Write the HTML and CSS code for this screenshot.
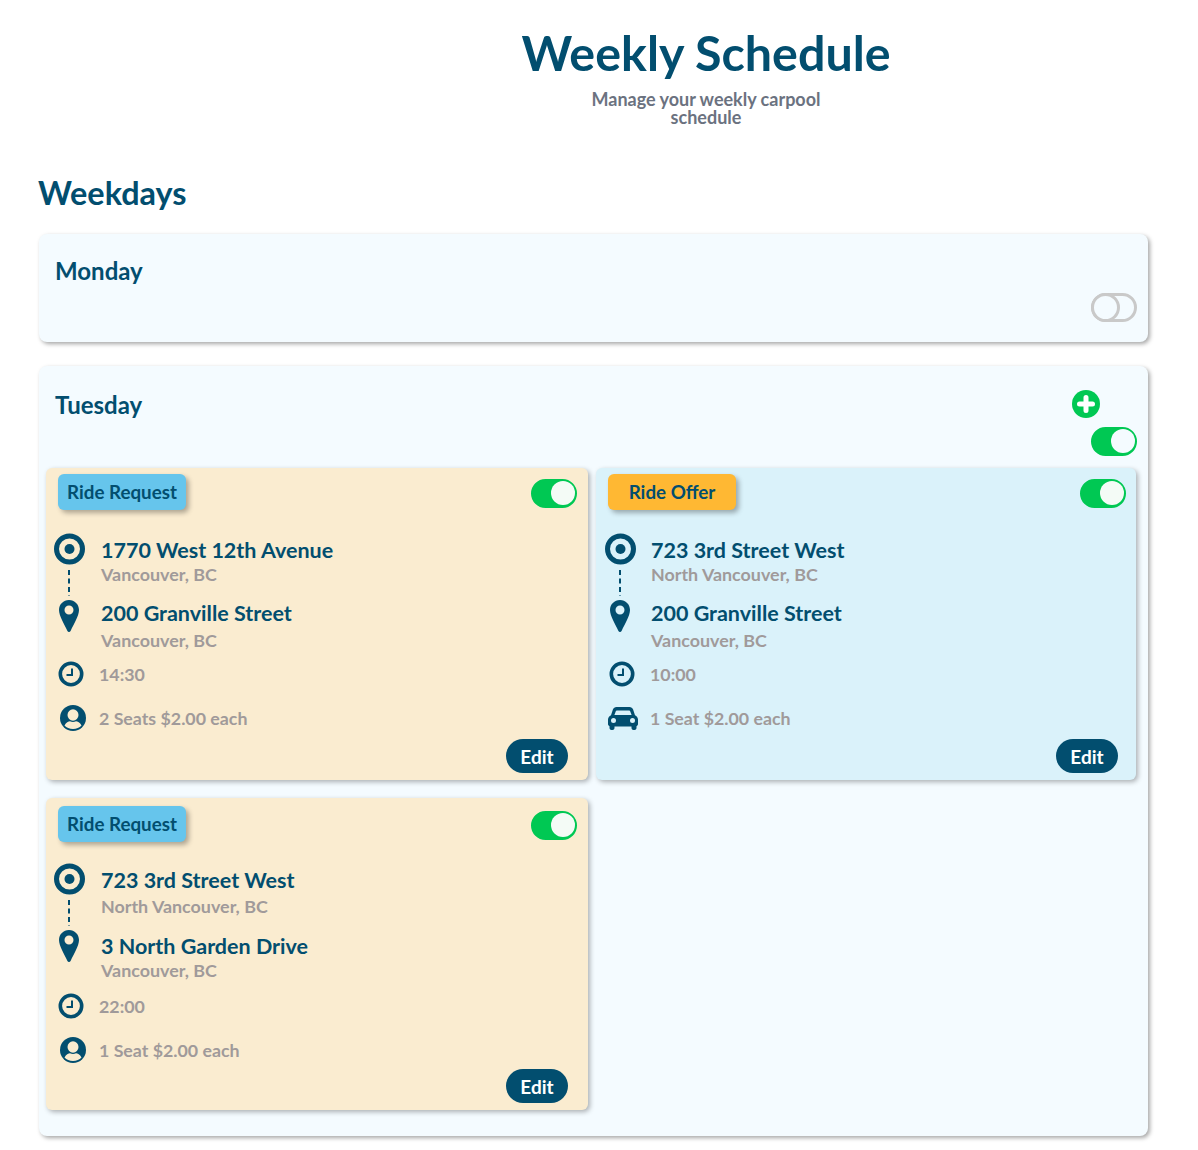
FILE: index.html
```html
<!DOCTYPE html>
<html lang="en">
<head>
<meta charset="utf-8">
<title>Weekly Schedule</title>
<link rel="stylesheet" href="styles.css">
</head>
<body>
<svg class="defs" width="0" height="0" aria-hidden="true">
  <defs>
    <symbol id="rail" viewBox="0 0 32 100">
      <circle cx="16.5" cy="16" r="13" fill="none" stroke="#024e6f" stroke-width="5"/>
      <circle cx="16.5" cy="16" r="5" fill="#024e6f"/>
      <path d="M16 37v26" stroke="#024e6f" stroke-width="2" stroke-dasharray="5 3.5" fill="none"/>
      <path fill-rule="evenodd" fill="#024e6f" d="M16 67c-5.600 0-10 4.400-10 10 0 6 5.500 14.500 8.300 20.800.7 1.600 2.700 1.600 3.400 0C20.500 91.500 26 83 26 77c0-5.600-4.400-10-10-10zm0 5.500a4.500 4.500 0 1 1 0 9 4.500 4.500 0 0 1 0-9z"/>
    </symbol>
    <symbol id="clock" viewBox="0 0 26 26">
      <circle cx="13" cy="13" r="10.700" fill="none" stroke="#024e6f" stroke-width="3.600"/>
      <path d="M14 7.500v6.500H8.500" fill="none" stroke="#024e6f" stroke-width="2"/>
    </symbol>
    <symbol id="person" viewBox="0 0 26 26">
      <circle cx="13" cy="13" r="13" fill="#024e6f"/>
      <ellipse cx="13" cy="10" rx="5.500" ry="5.800" fill="currentColor"/>
      <path d="M4.500 20.500c1.500-3 4-4.200 5.500-4.200 1.800 1 4.200 1 6 0 1.500 0 4 1.200 5.500 4.200-2 2.300-5 3.500-8.500 3.500s-6.500-1.200-8.500-3.500z" fill="currentColor"/>
    </symbol>
    <symbol id="car" viewBox="0 0 30 24">
      <path fill="#024e6f" fill-rule="evenodd" d="M8.500 1h13c1.700 0 3 1 3.600 2.600l1.900 5.600c1.700.7 3 2.300 3 4.300v4.500c0 1-.6 1.800-1.500 2.200V22c0 1.100-.9 2-2 2h-1c-1.100 0-2-.9-2-2v-1.500H6.500V22c0 1.100-.9 2-2 2h-1c-1.100 0-2-.9-2-2v-1.800C.6 19.800 0 19 0 18v-4.500c0-2 1.300-3.600 3-4.300l1.900-5.600C5.500 2 6.800 1 8.500 1zm.4 3.500c-.6 0-1 .3-1.200.9L6.400 9h17.200l-1.300-3.600c-.2-.6-.6-.9-1.200-.9H8.900zM5.500 12a2.500 2.500 0 1 0 0 5 2.500 2.500 0 0 0 0-5zm19 0a2.500 2.500 0 1 0 0 5 2.500 2.500 0 0 0 0-5z"/>
    </symbol>
  </defs>
</svg>

<header class="page-head">
  <h1 class="page-title">Weekly Schedule</h1>
  <p class="page-sub">Manage your weekly carpool schedule</p>
</header>

<main class="page">
  <h2 class="section-title">Weekdays</h2>

  <section class="day day-empty">
    <div class="day-head">
      <h3 class="day-name">Monday</h3>
      <div class="day-actions">
        <span class="toggle"></span>
      </div>
    </div>
  </section>

  <section class="day">
    <div class="day-head">
      <h3 class="day-name">Tuesday</h3>
      <div class="day-actions">
        <svg class="plus" viewBox="0 0 28 28" aria-hidden="true">
          <circle cx="14" cy="14" r="14" fill="#00c853"/>
          <path d="M14 7.500v13M7.500 14h13" stroke="#fff" stroke-width="5" stroke-linecap="round"/>
        </svg>
        <span class="toggle on"></span>
      </div>
    </div>

    <div class="rides">
      <article class="ride request">
        <div class="ride-head">
          <span class="badge">Ride Request</span>
          <span class="toggle on"></span>
        </div>
        <div class="route">
          <svg class="rail"><use href="#rail"/></svg>
          <div class="stops">
            <div class="addr">1770 West 12th Avenue</div>
            <div class="city">Vancouver, BC</div>
            <div class="addr second">200 Granville Street</div>
            <div class="city city-end">Vancouver, BC</div>
          </div>
        </div>
        <div class="meta time"><svg class="ico-clock"><use href="#clock"/></svg><span>14:30</span></div>
        <div class="meta seats"><svg class="ico-person"><use href="#person"/></svg><span>2 Seats $2.00 each</span></div>
        <div class="ride-foot"><button class="edit">Edit</button></div>
      </article>

      <article class="ride offer">
        <div class="ride-head">
          <span class="badge">Ride Offer</span>
          <span class="toggle on"></span>
        </div>
        <div class="route">
          <svg class="rail"><use href="#rail"/></svg>
          <div class="stops">
            <div class="addr">723 3rd Street West</div>
            <div class="city">North Vancouver, BC</div>
            <div class="addr second">200 Granville Street</div>
            <div class="city city-end">Vancouver, BC</div>
          </div>
        </div>
        <div class="meta time"><svg class="ico-clock"><use href="#clock"/></svg><span>10:00</span></div>
        <div class="meta seats"><svg class="ico-car"><use href="#car"/></svg><span>1 Seat $2.00 each</span></div>
        <div class="ride-foot"><button class="edit">Edit</button></div>
      </article>

      <article class="ride request lower">
        <div class="ride-head">
          <span class="badge">Ride Request</span>
          <span class="toggle on"></span>
        </div>
        <div class="route">
          <svg class="rail"><use href="#rail"/></svg>
          <div class="stops">
            <div class="addr">723 3rd Street West</div>
            <div class="city">North Vancouver, BC</div>
            <div class="addr second">3 North Garden Drive</div>
            <div class="city city-end">Vancouver, BC</div>
          </div>
        </div>
        <div class="meta time"><svg class="ico-clock"><use href="#clock"/></svg><span>22:00</span></div>
        <div class="meta seats"><svg class="ico-person"><use href="#person"/></svg><span>1 Seat $2.00 each</span></div>
        <div class="ride-foot"><button class="edit">Edit</button></div>
      </article>
    </div>
  </section>
</main>
</body>
</html>
```

FILE: styles.css
```css
*, *::before, *::after { box-sizing: border-box; }
html, body { margin: 0; padding: 0; background: #fff; }
body {
  font-family: Lato, "Open Sans", sans-serif;
  color: #024e6f;
  height: 1150px;
  overflow: hidden;
}
.defs { position: absolute; }

.page-head {
  display: flex;
  flex-direction: column;
  align-items: center;
  padding: 23px 0 0 214px;
}
.page-title {
  margin: 0;
  font-size: 48.4px;
  line-height: 58px;
  font-weight: 700;
}
.page-sub {
  margin: 9px 0 0;
  width: 240px;
  text-align: center;
  font-size: 18px;
  line-height: 18px;
  font-weight: 700;
  color: #6b7280;
}

.page { padding: 0 50px 0 38px; }
.section-title {
  margin: 47px 0 21px;
  font-size: 32.4px;
  line-height: 40px;
  font-weight: 700;
}

.day {
  margin: 0 0 24px 1px;
  padding: 0 11px 26px 7px;
  background: #f4fbff;
  border-radius: 8px;
  box-shadow: 2px 2px 4px rgba(0, 0, 0, 0.35);
}
.day-empty { height: 108px; padding-bottom: 0; }
.day-head {
  display: flex;
  justify-content: space-between;
  align-items: flex-start;
  padding-left: 9px;
}
.day-name {
  margin: 25px 0 0;
  font-size: 24px;
  line-height: 28px;
  font-weight: 700;
}
.day-empty .day-name { margin-top: 23px; }
.day-actions {
  display: flex;
  flex-direction: column;
  align-items: flex-end;
  gap: 9px;
  padding-top: 24px;
}
.day-empty .day-actions { padding-top: 59px; }
.plus { width: 28px; height: 28px; margin-right: 37px; }

.toggle {
  position: relative;
  display: block;
  flex: none;
  width: 46px;
  height: 29px;
  border: 3px solid #c9c9c9;
  border-radius: 15px;
}
.toggle::after {
  content: "";
  position: absolute;
  left: -3px;
  top: -3px;
  width: 29px;
  height: 29px;
  border: 3px solid #c9c9c9;
  border-radius: 50%;
  background: #f4fbff;
}
.toggle.on { background: #00c853; border-color: #00c853; }
.toggle.on::after {
  left: 17px;
  top: -1px;
  width: 24px;
  height: 24px;
  border: 0;
  background: #f4fbff;
}

.rides {
  display: grid;
  grid-template-columns: 542px 540px;
  gap: 18px 8px;
  margin-top: 12px;
}
.ride {
  display: flex;
  flex-direction: column;
  height: 312px;
  padding: 6px 11px 6px 7px;
  border-radius: 6px;
  box-shadow: 2px 2px 5px rgba(0, 0, 0, 0.3);
}
.request { background: #faecd0; --badge: #66c5ec; }
.offer { background: #daf2fa; --badge: #ffb833; padding: 6px 10px 6px 8px; }
.ride .toggle.on::after { background: #f4fbf6; }

.ride-head {
  display: flex;
  justify-content: space-between;
  align-items: flex-start;
  padding-left: 5px;
}
.ride-head .toggle { margin-top: 5px; }
.badge {
  display: block;
  width: 128px;
  height: 36px;
  text-align: center;
  font-size: 18.800px;
  line-height: 35px;
  font-weight: 700;
  background: var(--badge);
  border-radius: 6px;
  box-shadow: 3px 3px 5px rgba(0, 0, 0, 0.3);
}
.offer .badge { margin-left: -1px; }

.route {
  display: flex;
  margin-top: 23px;
}
.rail { width: 32px; height: 100px; flex: none; }
.stops { margin: 5px 0 0 16px; }
.offer .stops { margin-left: 15px; }
.addr {
  font-size: 21.500px;
  line-height: 24px;
  font-weight: 700;
  white-space: nowrap;
}
.addr.second { margin-top: 15px; }
.city {
  font-size: 17.900px;
  line-height: 24px;
  font-weight: 700;
  color: #a09a9a;
  white-space: nowrap;
}
.city-end { margin-top: 3px; }

.meta {
  display: flex;
  align-items: center;
  font-size: 17.800px;
  font-weight: 700;
  color: #a09a9a;
  white-space: nowrap;
}
.time { height: 26px; margin-top: 9px; padding-left: 5px; }
.time span { margin-left: 15px; }
.seats { height: 28px; margin-top: 17px; padding-left: 7px; }
.seats span { margin-left: 13px; }
.ico-clock { width: 26px; height: 26px; flex: none; }
.ico-person { width: 26px; height: 26px; flex: none; }
.ico-car { width: 30px; height: 24px; flex: none; margin-left: -3px; margin-right: -1px; }
.request .ico-person { color: #faecd0; }

.ride-foot {
  display: flex;
  justify-content: flex-end;
  margin-top: 7px;
  padding-right: 9px;
}
.offer .ride-foot { padding-right: 8px; }
.edit {
  width: 62px;
  height: 34px;
  padding: 0;
  border: 0;
  border-radius: 17px;
  background: #024e6f;
  color: #fff;
  font-family: inherit;
  font-size: 19px;
  font-weight: 700;
}

/* the lower card sits a couple of pixels differently in the reference */
.lower { padding-top: 8px; }
.lower .route { margin-top: 21px; }
.lower .city { margin-top: 2px; }
.lower .addr.second { margin-top: 16px; }
.lower .city-end { margin-top: 0; }
.lower .time { margin-top: 11px; }
.lower .ride-foot { margin-top: 5px; }
```
